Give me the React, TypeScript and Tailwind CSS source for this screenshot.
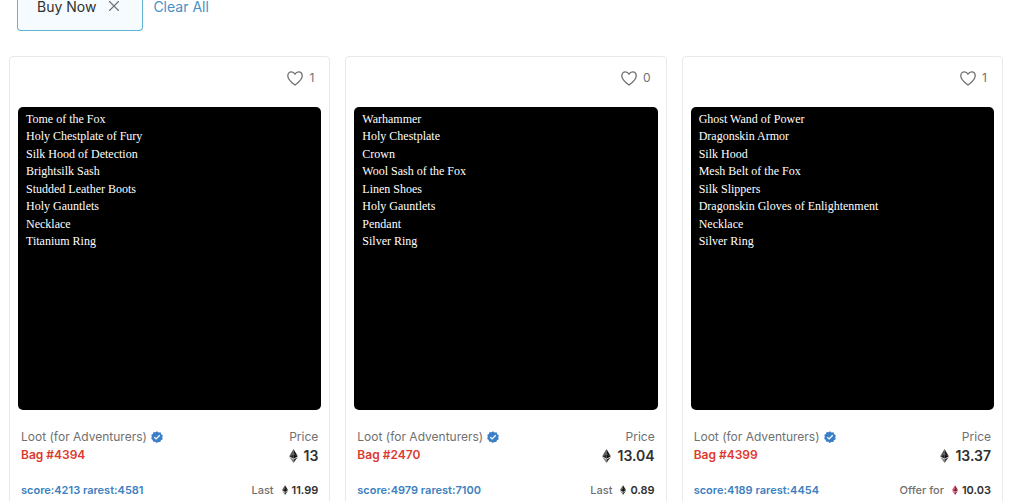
import { X } from "lucide-react";

interface Bag {
  id: number;
  likes: number;
  items: string[];
  score: number;
  rarest: number;
  price: string;
  footerLabel: string;
  footerPrice: string;
  isOffer?: boolean;
}

const BAGS: Bag[] = [
  {
    id: 4394,
    likes: 1,
    items: [
      "Tome of the Fox",
      "Holy Chestplate of Fury",
      "Silk Hood of Detection",
      "Brightsilk Sash",
      "Studded Leather Boots",
      "Holy Gauntlets",
      "Necklace",
      "Titanium Ring",
    ],
    score: 4213,
    rarest: 4581,
    price: "13",
    footerLabel: "Last",
    footerPrice: "11.99",
  },
  {
    id: 2470,
    likes: 0,
    items: [
      "Warhammer",
      "Holy Chestplate",
      "Crown",
      "Wool Sash of the Fox",
      "Linen Shoes",
      "Holy Gauntlets",
      "Pendant",
      "Silver Ring",
    ],
    score: 4979,
    rarest: 7100,
    price: "13.04",
    footerLabel: "Last",
    footerPrice: "0.89",
  },
  {
    id: 4399,
    likes: 1,
    items: [
      "Ghost Wand of Power",
      "Dragonskin Armor",
      "Silk Hood",
      "Mesh Belt of the Fox",
      "Silk Slippers",
      "Dragonskin Gloves of Enlightenment",
      "Necklace",
      "Silver Ring",
    ],
    score: 4189,
    rarest: 4454,
    price: "13.37",
    footerLabel: "Offer for",
    footerPrice: "10.03",
    isOffer: true,
  },
];

function HeartIcon() {
  return (
    <svg aria-hidden="true" viewBox="0 0 16 15" className="h-[15px] w-4" fill="none" stroke="currentColor" strokeWidth="1.3" strokeLinejoin="round">
      <path d="M8 14.1C5.2 11.9.8 8.6.8 4.9.8 2.5 2.4.9 4.4.9 6 .9 7.3 1.8 8 3.2 8.7 1.8 10 .9 11.6.9c2 0 3.6 1.6 3.6 4 0 3.7-4.4 7-7.2 9.2Z" />
    </svg>
  );
}

function VerifiedIcon() {
  return (
    <svg aria-hidden="true" viewBox="0 0 24 24" className="h-3 w-3 shrink-0">
      <path
        fill="#3b7fc9"
        d="M12 0.5 15.2 2.9 19.2 2.6 20.5 6.4 23.7 8.8 22.5 12.5 23.4 16.4 20 18.5 18.5 22.2 14.6 21.9 11.5 24 8.4 21.7 4.5 21.6 3.4 17.9.4 15.4 1.6 11.7.6 7.8 3.9 5.6 5.3 2 9.2 2.3Z"
      />
      <path fill="none" stroke="#fff" strokeWidth="2.6" d="m6.5 12.2 3.8 3.7 7.2-7.4" />
    </svg>
  );
}

// Four facets above the girdle, two below.
function EthIcon({ small, pink }: { small?: boolean; pink?: boolean }) {
  return (
    <svg aria-hidden="true" viewBox="0 0 16 26" className={small ? "h-[10px] w-[6px]" : "h-[14px] w-[9px]"}>
      <path fill={pink ? "#e0566f" : "#5a5a5a"} d="M8 0 0 13.3 8 9.7Z" />
      <path fill={pink ? "#8c2238" : "#1c1c1c"} d="M8 0v9.7l8 3.6Z" />
      <path fill={pink ? "#a8324b" : "#262626"} d="M8 9.7 0 13.3 8 18Z" />
      <path fill={pink ? "#701a2c" : "#0d0d0d"} d="M8 9.7V18l8-4.7Z" />
      <path fill={pink ? "#e0566f" : "#888"} d="M0 14.8 8 26v-6.5Z" />
      <path fill={pink ? "#8c2238" : "#333"} d="M16 14.8 8 26v-6.5Z" />
    </svg>
  );
}

function BagCard({ bag }: { bag: Bag }) {
  return (
    <article className="rounded-t-sm border border-[#e9e9e9] px-2 pb-4">
      <div className="flex h-[50px] items-center justify-end pr-[7px] pb-2">
        <button type="button" aria-label={`Like bag ${bag.id}`} className="flex items-center gap-1.5 text-xs text-[#707070]">
          <HeartIcon />
          <span>{bag.likes}</span>
        </button>
      </div>

      <div className="aspect-square rounded-[5px] bg-black px-2 pt-[3px]">
        <ul className="grid h-[140px] auto-rows-fr items-center font-['Liberation_Serif',serif] text-xs leading-4 text-white">
          {bag.items.map((item) => (
            <li key={item}>{item}</li>
          ))}
        </ul>
      </div>

      <div className="mt-[18px] flex justify-between px-[3px]">
        <div>
          <div className="flex items-center gap-1 text-xs leading-[18px] text-[#707070]">
            <a href="#loot">Loot (for Adventurers)</a>
            <VerifiedIcon />
          </div>
          <a href={`#bag-${bag.id}`} className="block text-xs leading-[18px] font-semibold text-[#dc3a30]">
            Bag #{bag.id}
          </a>
        </div>
        <div className="text-right">
          <div className="text-xs leading-[18px] text-[#707070]">Price</div>
          <div className="flex items-center justify-end gap-1.5 text-sm leading-5 font-semibold text-[#303030]">
            <EthIcon />
            {bag.price}
          </div>
        </div>
      </div>

      <div className="mt-4 flex items-center justify-between px-[3px] text-[11px] leading-4">
        <span className="font-semibold text-[#3d7fc1]">
          score:{bag.score} rarest:{bag.rarest}
        </span>
        <span className="flex items-center gap-2 font-medium text-[#707070]">
          {bag.footerLabel}
          <span className="flex items-center gap-1 font-semibold text-[#303030]">
            <EthIcon small pink={bag.isOffer} />
            {bag.footerPrice}
          </span>
        </span>
      </div>
    </article>
  );
}

export default function App() {
  return (
    <main className="h-screen overflow-hidden bg-white pr-[21px] pl-[9px] font-['Inter',sans-serif]">
      <div className="flex items-start gap-2.5 pl-2 text-sm">
        <button
          type="button"
          className="flex h-[31px] items-start gap-2.5 rounded-b-sm border border-t-0 border-[#5fb3d3] bg-[#f5fbfe] pr-5 pl-[19px] leading-[13px] text-[#303030]"
        >
          Buy Now
          <X aria-label="Remove filter" className="-mx-px h-[18px] w-[18px] -mt-[3px] text-[#707070]" strokeWidth={1.5} />
        </button>
        <button type="button" className="leading-[13px] text-[#4a90c4]">
          Clear All
        </button>
      </div>

      <div className="mt-[25px] grid grid-cols-3 gap-[15px]">
        {BAGS.map((bag) => (
          <BagCard key={bag.id} bag={bag} />
        ))}
      </div>
    </main>
  );
}
